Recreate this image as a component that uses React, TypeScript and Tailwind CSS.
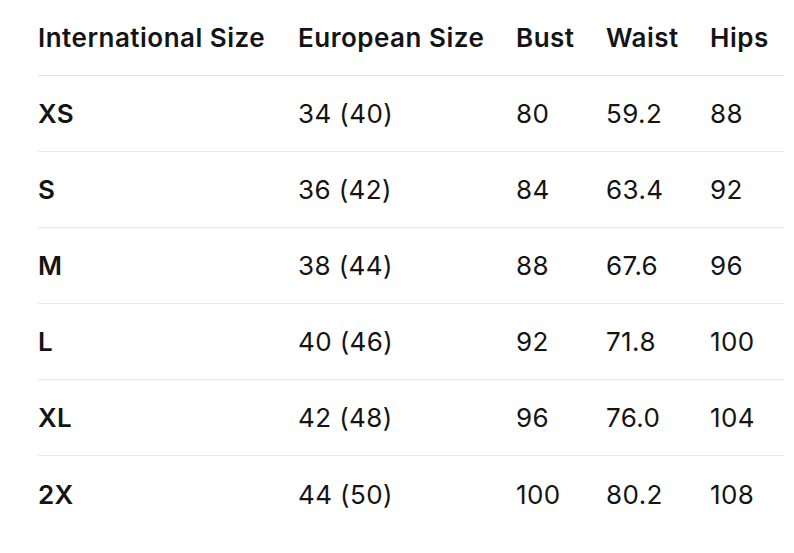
const HEADERS = ["International Size", "European Size", "Bust", "Waist", "Hips"]

const ROWS = [
  ["XS", "34 (40)", "80", "59.2", "88"],
  ["S", "36 (42)", "84", "63.4", "92"],
  ["M", "38 (44)", "88", "67.6", "96"],
  ["L", "40 (46)", "92", "71.8", "100"],
  ["XL", "42 (48)", "96", "76.0", "104"],
  ["2X", "44 (50)", "100", "80.2", "108"],
]

const COLS = "grid grid-cols-[260px_218px_90px_104px_1fr]"

export default function App() {
  return (
    <div
      className="min-h-[553px] bg-white pl-[38px] pr-[10px] text-[#141414]"
      style={{ fontFamily: "Inter, 'Noto Sans', sans-serif" }}
    >
      <div className={`${COLS} h-[76px] items-center border-b border-[#e3e3e3] text-[26px] font-semibold tracking-[0.5px]`}>
        {HEADERS.map((h) => (
          <div key={h} className="whitespace-nowrap">{h}</div>
        ))}
      </div>
      {ROWS.map((row, i) => (
        <div
          key={row[0]}
          className={`${COLS} h-[76px] items-center text-[26px] tracking-[0.4px] ${
            i < ROWS.length - 1 ? "border-b border-[#e8e8e8]" : ""
          }`}
        >
          {row.map((cell, j) => (
            <div key={j} className={j === 0 ? "font-semibold" : "font-normal"}>
              {cell}
            </div>
          ))}
        </div>
      ))}
    </div>
  )
}
